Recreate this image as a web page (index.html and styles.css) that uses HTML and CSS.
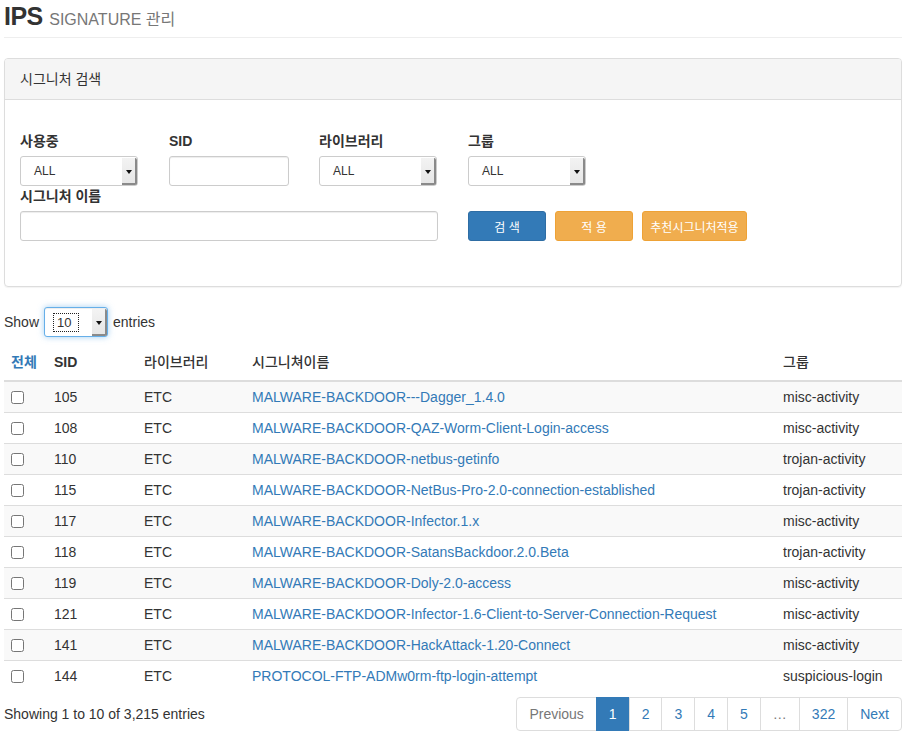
FILE: index.html
```html
<!DOCTYPE html>
<html lang="ko">
<head>
<meta charset="utf-8">
<title>IPS SIGNATURE 관리</title>
<link rel="stylesheet" href="styles.css">
</head>
<body>
<div class="page">
  <div class="page-header">
    <h1>IPS <small>SIGNATURE 관리</small></h1>
  </div>

  <div class="panel">
    <div class="panel-heading">시그니처 검색</div>
    <div class="panel-body">
      <div class="search-grid">
        <div class="field">
          <label class="label">사용중</label>
          <span class="select"><span class="select-value">ALL</span><span class="select-arrow"></span></span>
        </div>
        <div class="field">
          <label class="label">SID</label>
          <input class="input input-sid" type="text">
        </div>
        <div class="field">
          <label class="label">라이브러리</label>
          <span class="select"><span class="select-value">ALL</span><span class="select-arrow"></span></span>
        </div>
        <div class="field">
          <label class="label">그룹</label>
          <span class="select"><span class="select-value">ALL</span><span class="select-arrow"></span></span>
        </div>
        <div class="field field-name">
          <label class="label">시그니처 이름</label>
          <input class="input input-name" type="text">
        </div>
        <div class="buttons">
          <button class="btn btn-primary btn-narrow">검 색</button>
          <button class="btn btn-warning btn-narrow">적 용</button>
          <button class="btn btn-warning">추천시그니처적용</button>
        </div>
      </div>
    </div>
  </div>

  <div class="length">
    <span>Show</span>
    <span class="select select-focus"><span class="select-value"><span class="focus-ring">10</span></span><span class="select-arrow"></span></span>
    <span>entries</span>
  </div>

  <table class="table">
    <colgroup>
      <col class="c1"><col class="c2"><col class="c3"><col class="c4"><col class="c5">
    </colgroup>
    <thead>
      <tr><th class="all">전체</th><th>SID</th><th>라이브러리</th><th>시그니쳐이름</th><th>그룹</th></tr>
    </thead>
    <tbody>
      <tr><td><input type="checkbox"></td><td>105</td><td>ETC</td><td><a href="#">MALWARE-BACKDOOR---Dagger_1.4.0</a></td><td>misc-activity</td></tr>
      <tr><td><input type="checkbox"></td><td>108</td><td>ETC</td><td><a href="#">MALWARE-BACKDOOR-QAZ-Worm-Client-Login-access</a></td><td>misc-activity</td></tr>
      <tr><td><input type="checkbox"></td><td>110</td><td>ETC</td><td><a href="#">MALWARE-BACKDOOR-netbus-getinfo</a></td><td>trojan-activity</td></tr>
      <tr><td><input type="checkbox"></td><td>115</td><td>ETC</td><td><a href="#">MALWARE-BACKDOOR-NetBus-Pro-2.0-connection-established</a></td><td>trojan-activity</td></tr>
      <tr><td><input type="checkbox"></td><td>117</td><td>ETC</td><td><a href="#">MALWARE-BACKDOOR-Infector.1.x</a></td><td>misc-activity</td></tr>
      <tr><td><input type="checkbox"></td><td>118</td><td>ETC</td><td><a href="#">MALWARE-BACKDOOR-SatansBackdoor.2.0.Beta</a></td><td>trojan-activity</td></tr>
      <tr><td><input type="checkbox"></td><td>119</td><td>ETC</td><td><a href="#">MALWARE-BACKDOOR-Doly-2.0-access</a></td><td>misc-activity</td></tr>
      <tr><td><input type="checkbox"></td><td>121</td><td>ETC</td><td><a href="#">MALWARE-BACKDOOR-Infector-1.6-Client-to-Server-Connection-Request</a></td><td>misc-activity</td></tr>
      <tr><td><input type="checkbox"></td><td>141</td><td>ETC</td><td><a href="#">MALWARE-BACKDOOR-HackAttack-1.20-Connect</a></td><td>misc-activity</td></tr>
      <tr><td><input type="checkbox"></td><td>144</td><td>ETC</td><td><a href="#">PROTOCOL-FTP-ADMw0rm-ftp-login-attempt</a></td><td>suspicious-login</td></tr>
    </tbody>
  </table>

  <div class="table-footer">
    <div class="info">Showing 1 to 10 of 3,215 entries</div>
    <ul class="pagination">
      <li class="disabled"><a href="#">Previous</a></li>
      <li class="active"><a href="#">1</a></li>
      <li><a href="#">2</a></li>
      <li><a href="#">3</a></li>
      <li><a href="#">4</a></li>
      <li><a href="#">5</a></li>
      <li class="disabled"><a href="#">…</a></li>
      <li><a href="#">322</a></li>
      <li><a href="#">Next</a></li>
    </ul>
  </div>
</div>
</body>
</html>
```

FILE: styles.css
```css
* { box-sizing: border-box; }

html, body {
  margin: 0;
  padding: 0;
  background: #fff;
}

body {
  font-family: "Liberation Sans", Arial, "Noto Sans CJK KR", sans-serif;
  font-size: 14px;
  line-height: 20px;
  color: #333;
}

.page {
  padding: 0 3px 0 4px;
}

.page-header {
  padding: 1px 0 6px;
  border-bottom: 1px solid #eee;
}

.page-header h1 {
  margin: 0;
  height: 30px;
  font-size: 25px;
  line-height: 30px;
  font-weight: bold;
  color: #333;
  letter-spacing: -0.5px;
  overflow: hidden;
}

.page-header h1 small {
  font-size: 16px;
  line-height: 1;
  font-weight: normal;
  color: #777;
  letter-spacing: 0;
}

.panel {
  margin-top: 20px;
  border: 1px solid #ddd;
  border-radius: 4px;
  box-shadow: 0 1px 1px rgba(0,0,0,0.05);
}

.panel-heading {
  padding: 10px 15px;
  background: #f5f5f5;
  border-bottom: 1px solid #ddd;
  border-radius: 3px 3px 0 0;
  height: 41px;
}

.panel-body {
  padding: 31px 15px 45px;
}

.search-grid {
  display: grid;
  grid-template-columns: 149px 150px 149px 1fr;
}

.field {
  display: flex;
  flex-direction: column;
  align-items: flex-start;
}

.label {
  font-weight: bold;
  margin-bottom: 5px;
  line-height: 20px;
}

.field-name {
  grid-column: 1 / 4;
}

.input {
  height: 30px;
  border: 1px solid #ccc;
  border-radius: 3px;
  box-shadow: inset 0 1px 1px rgba(0,0,0,0.075);
  padding: 5px 10px;
  font: inherit;
  background: #fff;
}

.input-sid { width: 120px; }
.input-name { width: 418px; }

.select {
  display: inline-flex;
  align-items: stretch;
  width: 118px;
  height: 30px;
  border: 1px solid #ccc;
  border-radius: 3px;
  background: #fff;
  font-size: 12px;
  color: #333;
}

.select-value {
  flex: 1;
  display: flex;
  align-items: center;
  padding-left: 13px;
}

.select-arrow {
  position: relative;
  width: 15px;
  margin: 1px 0 0;
  background: linear-gradient(#f3f3f3, #e6e6e6);
  border-right: 2px solid #8a8a8a;
  border-bottom: 2px solid #8a8a8a;
  border-radius: 0 2px 2px 0;
}

.select-arrow::after {
  content: "";
  position: absolute;
  left: 4px;
  top: 12px;
  border-left: 3px solid transparent;
  border-right: 3px solid transparent;
  border-top: 4px solid #111;
}

.buttons {
  grid-column: 4;
  display: flex;
  gap: 9px;
  align-self: end;
}

.btn {
  height: 30px;
  padding: 0 10px;
  border: 1px solid transparent;
  border-radius: 3px;
  font-family: inherit;
  font-size: 12px;
  color: #fff;
  cursor: pointer;
}

.btn-narrow { width: 78px; }

.btn-primary {
  background: #337ab7;
  border-color: #2e6da4;
}

.btn-warning {
  background: #f0ad4e;
  border-color: #eea236;
  width: 105px;
  padding: 0 4px;
}

.btn-warning.btn-narrow { width: 78px; }

.length {
  margin-top: 20px;
  display: flex;
  align-items: center;
  gap: 5px;
  height: 30px;
}

.select-focus {
  width: 64px;
  border-color: #66afe9;
  box-shadow: inset 0 1px 1px rgba(0,0,0,.075), 0 0 6px rgba(102,175,233,.6);
  font-size: 13px;
}

.select-focus .select-value {
  padding-left: 9px;
}

.focus-ring {
  outline: 1px dotted #222;
  padding: 0 6px 0 3px;
  line-height: 17px;
}

.table {
  width: 100%;
  margin-top: 10px;
  border-collapse: collapse;
  table-layout: fixed;
}

.c1 { width: 45px; }
.c2 { width: 90px; }
.c3 { width: 108px; }
.c4 { width: 531px; }
.c5 { width: 124px; }

.table th,
.table td {
  padding: 5px;
  line-height: 20px;
  text-align: left;
  white-space: nowrap;
  overflow: hidden;
}

.table td {
  border-top: 1px solid #ddd;
}

.table th {
  font-weight: bold;
  padding-bottom: 8px;
  border-bottom: 2px solid #ddd;
}

.table th.all {
  color: #337ab7;
  padding-left: 7px;
}

.table th:nth-child(n+3) {
  font-weight: 500;
}

.table tbody tr:nth-child(odd) td {
  background: #f9f9f9;
}

.table input[type="checkbox"] {
  margin: 0 0 0 2px;
  width: 13px;
  height: 13px;
  vertical-align: -2px;
}

.table a {
  color: #337ab7;
  text-decoration: none;
}

.table-footer {
  margin-top: 6px;
  display: flex;
  justify-content: space-between;
  align-items: center;
}

.pagination {
  display: flex;
  margin: 0;
  padding: 0;
  list-style: none;
}

.pagination li a {
  display: block;
  padding: 6px 12px;
  line-height: 20px;
  color: #337ab7;
  text-decoration: none;
  border: 1px solid #ddd;
  margin-left: -1px;
  background: #fff;
}

.pagination li:first-child a {
  margin-left: 0;
  border-radius: 4px 0 0 4px;
}

.pagination li:last-child a {
  border-radius: 0 4px 4px 0;
}

.pagination li.disabled a {
  color: #777;
}

.pagination li.active a {
  background: #337ab7;
  border-color: #337ab7;
  color: #fff;
}
```
